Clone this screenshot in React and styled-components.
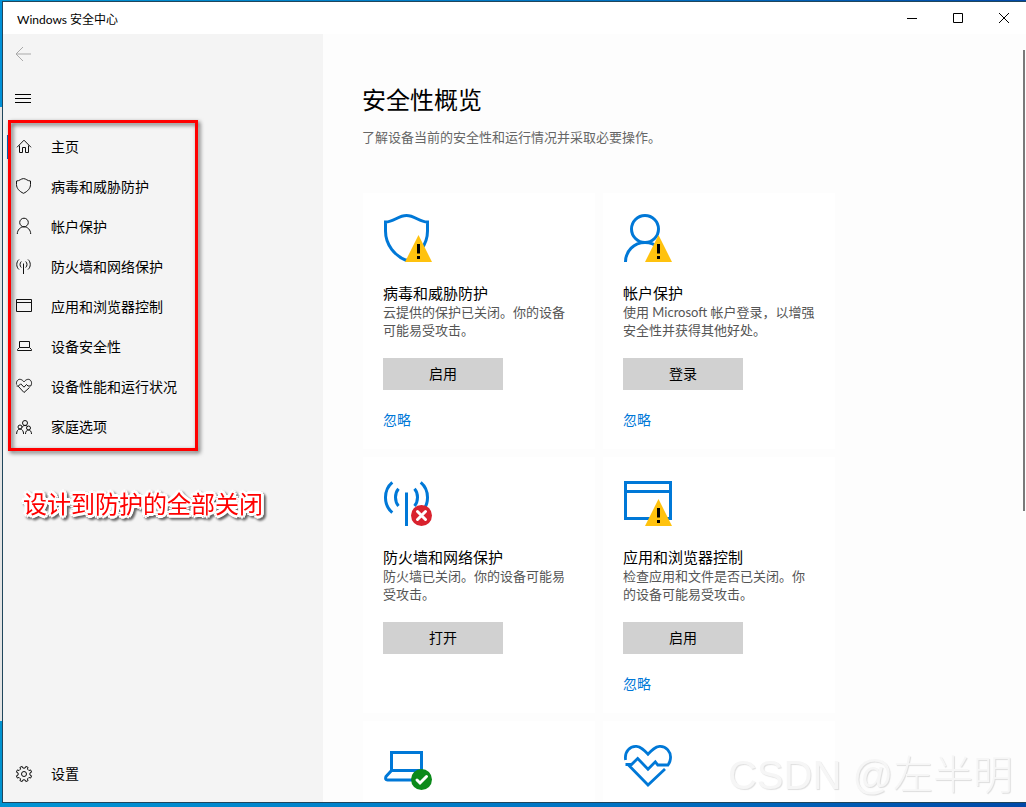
import React from "react";
import styled, { createGlobalStyle } from "styled-components";

const GlobalStyle = createGlobalStyle`
  * { box-sizing: border-box; }
  body {
    margin: 0;
    font-family: Lato, "Noto Sans CJK SC", sans-serif;
    color: #000;
  }
  button { font: inherit; color: inherit; cursor: pointer; }
`;

const Desktop = styled.div`
  height: 100vh;
  display: flex;
  overflow: hidden;
  padding: 1px 0 4px 2px;
  background:
    linear-gradient(#0091d8 107px, #e4e4e4 107px, #e4e4e4 calc(100% - 86px), #0093d0 calc(100% - 86px)) 0 0 / 2px 100% no-repeat,
    linear-gradient(90deg, #0094d4, #0072c2 60%, #0049a8);
`;

const Window = styled.div`
  flex: 1;
  min-width: 0;
  display: flex;
  flex-direction: column;
  border: 1px solid #20465c;
  border-right: 0;
  background: #fff;
  overflow: hidden;
`;

const TitleBar = styled.header`
  flex: none;
  height: 32px;
  display: flex;
  align-items: center;
  justify-content: space-between;
  padding-left: 14px;
  font-size: 12px;
`;

const Controls = styled.div`
  display: flex;
  height: 100%;
  margin-right: -1px;
`;

const ControlButton = styled.button`
  width: 46px;
  padding: 0;
  border: 0;
  background: transparent;
  display: grid;
  place-items: center;
`;

const Body = styled.div`
  flex: 1;
  min-height: 0;
  display: flex;
`;

const Sidebar = styled.aside`
  flex: none;
  width: 320px;
  background: #f4f4f4;
  display: flex;
  flex-direction: column;
  padding-bottom: 8px;
`;

const IconButton = styled.button`
  width: 40px;
  height: 40px;
  padding: 0;
  margin-bottom: 4px;
  border: 0;
  background: transparent;
  display: grid;
  place-items: center;
  color: ${(p) => (p.$dim ? "#a9a9a9" : "#000")};
`;

const Nav = styled.nav`
  position: relative;
  margin-top: 5px;
`;

const NavList = styled.ul`
  list-style: none;
  margin: 0;
  padding: 0;
`;

const NavLink = styled.a`
  display: flex;
  align-items: center;
  gap: 19px;
  height: 40px;
  padding-left: 9px;
  margin-left: 4px;
  font-size: 14px;
  line-height: 20px;
  color: #000;
  text-decoration: none;
  background: linear-gradient(#0067b8, #0067b8) 0 center / 2px 24px no-repeat;
  background-size: ${(p) => (p.$active ? "2px 24px" : "0 0")};
`;

const NavIcon = styled.svg`
  flex: none;
  width: 16px;
  height: 16px;
  overflow: visible;
  fill: none;
  stroke: #111;
  stroke-width: 1;
`;

const Highlight = styled.div`
  position: absolute;
  top: -7px;
  bottom: -4px;
  left: 5px;
  width: 190px;
  border: 3px solid #f00;
  filter: drop-shadow(2px 2px 2px rgba(0, 0, 0, 0.6));
  pointer-events: none;
`;

const Note = styled.p`
  margin: 38px 0 0 20px;
  font-size: 24px;
  line-height: 36px;
  font-weight: 400;
  font-family: "Noto Sans CJK SC", sans-serif;
  color: #f00;
  text-shadow:
    3px 0 #fff, -3px 0 #fff, 0 3px #fff, 0 -3px #fff,
    2px 2px #fff, -2px 2px #fff, 2px -2px #fff, -2px -2px #fff,
    1px 0 #fff, -1px 0 #fff, 0 1px #fff, 0 -1px #fff;
  filter: drop-shadow(2px 2px 1px rgba(0, 0, 0, 0.6));
`;

const SidebarFooter = styled.div`
  margin-top: auto;
`;

const Main = styled.main`
  flex: 1;
  min-width: 0;
  overflow: hidden;
  padding: 48px 20px 0 39px;
  background: #fdfdfd;
`;

const Heading = styled.h1`
  margin: 0;
  font-size: 24px;
  line-height: 36px;
  font-weight: 400;
`;

const Intro = styled.p`
  margin: 10px 0 0;
  font-size: 13px;
  line-height: 18px;
  color: #666;
`;

const Cards = styled.div`
  margin: 47px 0 0 1px;
  display: grid;
  grid-template-columns: repeat(auto-fill, 232px);
  grid-auto-rows: 256px;
  gap: 8px;
  max-width: 480px;
`;

const Card = styled.section`
  padding: 20px;
  background: #fff;
`;

const CardIcon = styled.svg`
  display: block;
  width: 50px;
  height: 50px;
  fill: none;
  stroke: #0078d7;
  stroke-width: 3;
`;

const CardTitle = styled.h2`
  margin: 20px 0 0;
  font-size: 15px;
  line-height: 20px;
  font-weight: 400;
`;

const CardText = styled.p`
  margin: 0 -2px 0 0;
  font-size: 13px;
  line-height: 18px;
  color: #555;
`;

const ActionButton = styled.button`
  display: block;
  width: 120px;
  height: 32px;
  margin-top: 19px;
  padding: 0;
  border: 0;
  background: #d1d1d1;
  font-size: 14px;
  line-height: 20px;
`;

const DismissLink = styled.a`
  display: inline-block;
  margin-top: 20px;
  font-size: 14px;
  line-height: 20px;
  color: #0078d7;
  text-decoration: none;
`;

const Rail = styled.div`
  flex: none;
  width: 3px;
  padding-top: 16px;
  background: #fdfdfd;
`;

const Thumb = styled.div`
  width: 2px;
  height: calc(61% + 2px);
  background: #7a7a7a;
`;

const Watermark = styled.div`
  position: fixed;
  right: 13px;
  bottom: 2px;
  font-family: "Liberation Sans", "Noto Sans CJK SC", sans-serif;
  font-size: 40px;
  line-height: 60px;
  font-weight: 300;
  color: #f6f6f6;
  text-shadow: 1px 1px 1px rgba(0, 0, 0, 0.13);
  pointer-events: none;
`;

function gearPath(teeth, inner, outer) {
  const step = (Math.PI * 2) / teeth;
  const at = (a, r) => `${(8 + Math.sin(a) * r).toFixed(2)} ${(8 - Math.cos(a) * r).toFixed(2)}`;
  const parts = [];
  for (let i = 0; i < teeth; i += 1) {
    const a = i * step + step / 2;
    parts.push(at(a - step * 0.27, inner), at(a - step * 0.2, outer), at(a + step * 0.2, outer), at(a + step * 0.27, inner));
  }
  return `M${parts.join("L")}Z`;
}

const navIcons = {
  home: <path d="M1 8.3 8 1.2l7 7.1M3.5 6.5v7h3v-5h3v5h3v-7" />,
  shield: <path d="M.5 2C3.5 2 5-.4 7.5-.4S11.500 2 14.500 2v3.500c0 4-3 7-7 8.800-4-1.800-7-4.800-7-8.800z" />,
  person: (
    <>
      <circle cx="8" cy="3.500" r="4.300" />
      <path d="M1.300 15c0-4 3-7.200 6.700-7.200s6.700 3.200 6.700 7.200" />
    </>
  ),
  antenna: <path d="M7.500 4.500V15M3 .5C0 3 0 8 3 10.500M5.300 2.500c-1.700 1.500-1.700 4.500 0 6M12 .5c3 2.500 3 7.500 0 10M9.700 2.500c1.700 1.500 1.700 4.500 0 6" />,
  browser: <path d="M.5.5h15v12H.5zM.5 3.500h15" />,
  laptop: <path d="M3.500 2.500h10v6h-10zM3.500 8.500l-2 2v1h14v-1l-2-2" />,
  heart: (
    <path d="M.6 5.500C-.2 2.500 2-.2 4.500.4 6 .7 7 1.700 8 2.800 9 1.700 10 .7 11.500.4 14-.2 16.400 2.500 15.300 5.700L14.700 7H12l-1.500-1.500L8 8.200 4.700 4.800 2.500 7H.6M2.200 7.200 8 13.500 13.500 8.500" />
  ),
  family: (
    <>
      <circle cx="9" cy="4" r="2.500" />
      <circle cx="4" cy="8" r="2" />
      <circle cx="12.500" cy="9" r="2" />
      <path d="M.6 15c0-3 1.400-5 3.400-5s3.600 2 3.600 5M9.500 15c0-2.500 1.200-4 3-4s3 1.500 3 4M6 8.500c.5-1.300 1.500-2 3-2s2.500.7 3 1.500" />
    </>
  ),
  gear: (
    <>
      <path d={gearPath(8, 6, 7.8)} strokeLinejoin="round" />
      <circle cx="8" cy="8" r="2.500" />
    </>
  ),
};

const cardIcons = {
  shield: <path d="M1.500 8C10 8 14 1.500 22.500 1.500S35 8 43.500 8v9c0 14-9.500 25-21 29.500C11 42 1.500 31 1.500 17z" />,
  person: (
    <>
      <circle cx="21" cy="15" r="13.500" />
      <path d="M1.500 48c0-11 8.500-19.500 19.500-19.500S40.500 37 40.500 48" />
    </>
  ),
  antenna: (
    <path d="M22.500 14.500V48M8.300 4.300C-.8 12-.8 27 8.300 34.700M14.500 10.700c-4 4.500-4 12.800 0 17.300M36.700 4.300c9.100 7.700 9.100 22.700 0 30.400M30.500 10.700c4 4.500 4 12.800 0 17.300" />
  ),
  browser: <path d="M1.500 4.500h45v36h-45zM1.500 13.500h45" />,
  laptop: <path d="M7.500 10.500h30v18h-30zM7.500 28.500l-5.500 6q-1.200 3.500 1.500 3.500H36M37.500 28.500l5 5" />,
  heart: (
    <path
      strokeWidth="2.800"
      d="M1.600 18C.3 9.500 6 3.900 12.500 4.400 17 4.800 20 8 24 12.200 28 8 31 4.800 35.500 4.400 42 3.900 47.500 10 46.400 17c-.3 2.500-1.300 4.500-2.400 6H33.800L31.300 19.800 24 27.200 13.700 16.500 7.500 22.500H1.500M4 22.500 24 43 41 27"
    />
  ),
};

const badges = {
  warning: (
    <g stroke="none">
      <path d="M34.500 21 48 48H21z" fill="#ffc20e" />
      <path d="M33 30h3v9.500h-3zM33 42h3v3h-3z" fill="#000" />
    </g>
  ),
  error: (
    <g>
      <circle cx="37.500" cy="37.500" r="10.500" fill="#d9222e" stroke="none" />
      <path d="m33.500 33.500 8 8m0-8-8 8" stroke="#fff" strokeLinecap="round" />
    </g>
  ),
  ok: (
    <g>
      <circle cx="37.500" cy="37.500" r="10.500" fill="#0b8a1a" stroke="none" />
      <path d="m33 38 3 3 6.500-6.500" stroke="#fff" strokeLinecap="round" />
    </g>
  ),
};

const navItems = [
  ["home", "主页"],
  ["shield", "病毒和威胁防护"],
  ["person", "帐户保护"],
  ["antenna", "防火墙和网络保护"],
  ["browser", "应用和浏览器控制"],
  ["laptop", "设备安全性"],
  ["heart", "设备性能和运行状况"],
  ["family", "家庭选项"],
];

const cards = [
  { icon: "shield", badge: "warning", title: "病毒和威胁防护", text: "云提供的保护已关闭。你的设备可能易受攻击。", action: "启用", dismiss: true },
  { icon: "person", badge: "warning", title: "帐户保护", text: "使用 Microsoft 帐户登录，以增强安全性并获得其他好处。", action: "登录", dismiss: true },
  { icon: "antenna", badge: "error", title: "防火墙和网络保护", text: "防火墙已关闭。你的设备可能易受攻击。", action: "打开" },
  { icon: "browser", badge: "warning", title: "应用和浏览器控制", text: "检查应用和文件是否已关闭。你的设备可能易受攻击。", action: "启用", dismiss: true },
  { icon: "laptop", badge: "ok" },
  { icon: "heart" },
];

function NavItem({ icon, label, active }) {
  return (
    <NavLink href="#" $active={active}>
      <NavIcon viewBox="0 0 16 16" aria-hidden="true">{navIcons[icon]}</NavIcon>
      {label}
    </NavLink>
  );
}

function StatusCard({ icon, badge, title, text, action, dismiss }) {
  return (
    <Card>
      <CardIcon viewBox="-1 -1 50 50" aria-hidden="true">
        {cardIcons[icon]}
        {badge && badges[badge]}
      </CardIcon>
      {title && <CardTitle>{title}</CardTitle>}
      {text && <CardText>{text}</CardText>}
      {action && <ActionButton type="button">{action}</ActionButton>}
      {dismiss && <DismissLink href="#">忽略</DismissLink>}
    </Card>
  );
}

export default function App() {
  return (
    <Desktop>
      <GlobalStyle />
      <Window>
        <TitleBar>
          <span>Windows 安全中心</span>
          <Controls>
            <ControlButton type="button" aria-label="最小化">
              <svg width="10" height="10" stroke="#000" fill="none"><path d="M0 5.500h10" /></svg>
            </ControlButton>
            <ControlButton type="button" aria-label="最大化">
              <svg width="10" height="10" stroke="#000" fill="none"><path d="M.5.5h9v9h-9z" /></svg>
            </ControlButton>
            <ControlButton type="button" aria-label="关闭">
              <svg width="10" height="10" stroke="#000" fill="none"><path d="m0 0 10 10M10 0 0 10" /></svg>
            </ControlButton>
          </Controls>
        </TitleBar>
        <Body>
          <Sidebar>
            <IconButton type="button" aria-label="返回" $dim>
              <svg width="16" height="16" stroke="currentColor" fill="none"><path d="M16 8H1M8 1 1 8l7 7" /></svg>
            </IconButton>
            <IconButton type="button" aria-label="菜单">
              <svg width="16" height="16" stroke="currentColor" fill="none"><path d="M0 4.500h16M0 8.500h16M0 12.500h16" /></svg>
            </IconButton>
            <Nav>
              <NavList>
                {navItems.map(([icon, label], i) => (
                  <li key={icon}><NavItem icon={icon} label={label} active={i === 0} /></li>
                ))}
              </NavList>
              <Highlight />
            </Nav>
            <Note>设计到防护的全部关闭</Note>
            <SidebarFooter>
              <NavItem icon="gear" label="设置" />
            </SidebarFooter>
          </Sidebar>
          <Main>
            <Heading>安全性概览</Heading>
            <Intro>了解设备当前的安全性和运行情况并采取必要操作。</Intro>
            <Cards>
              {cards.map((card) => <StatusCard key={card.icon} {...card} />)}
            </Cards>
          </Main>
          <Rail><Thumb /></Rail>
        </Body>
      </Window>
      <Watermark>CSDN @左半明</Watermark>
    </Desktop>
  );
}
